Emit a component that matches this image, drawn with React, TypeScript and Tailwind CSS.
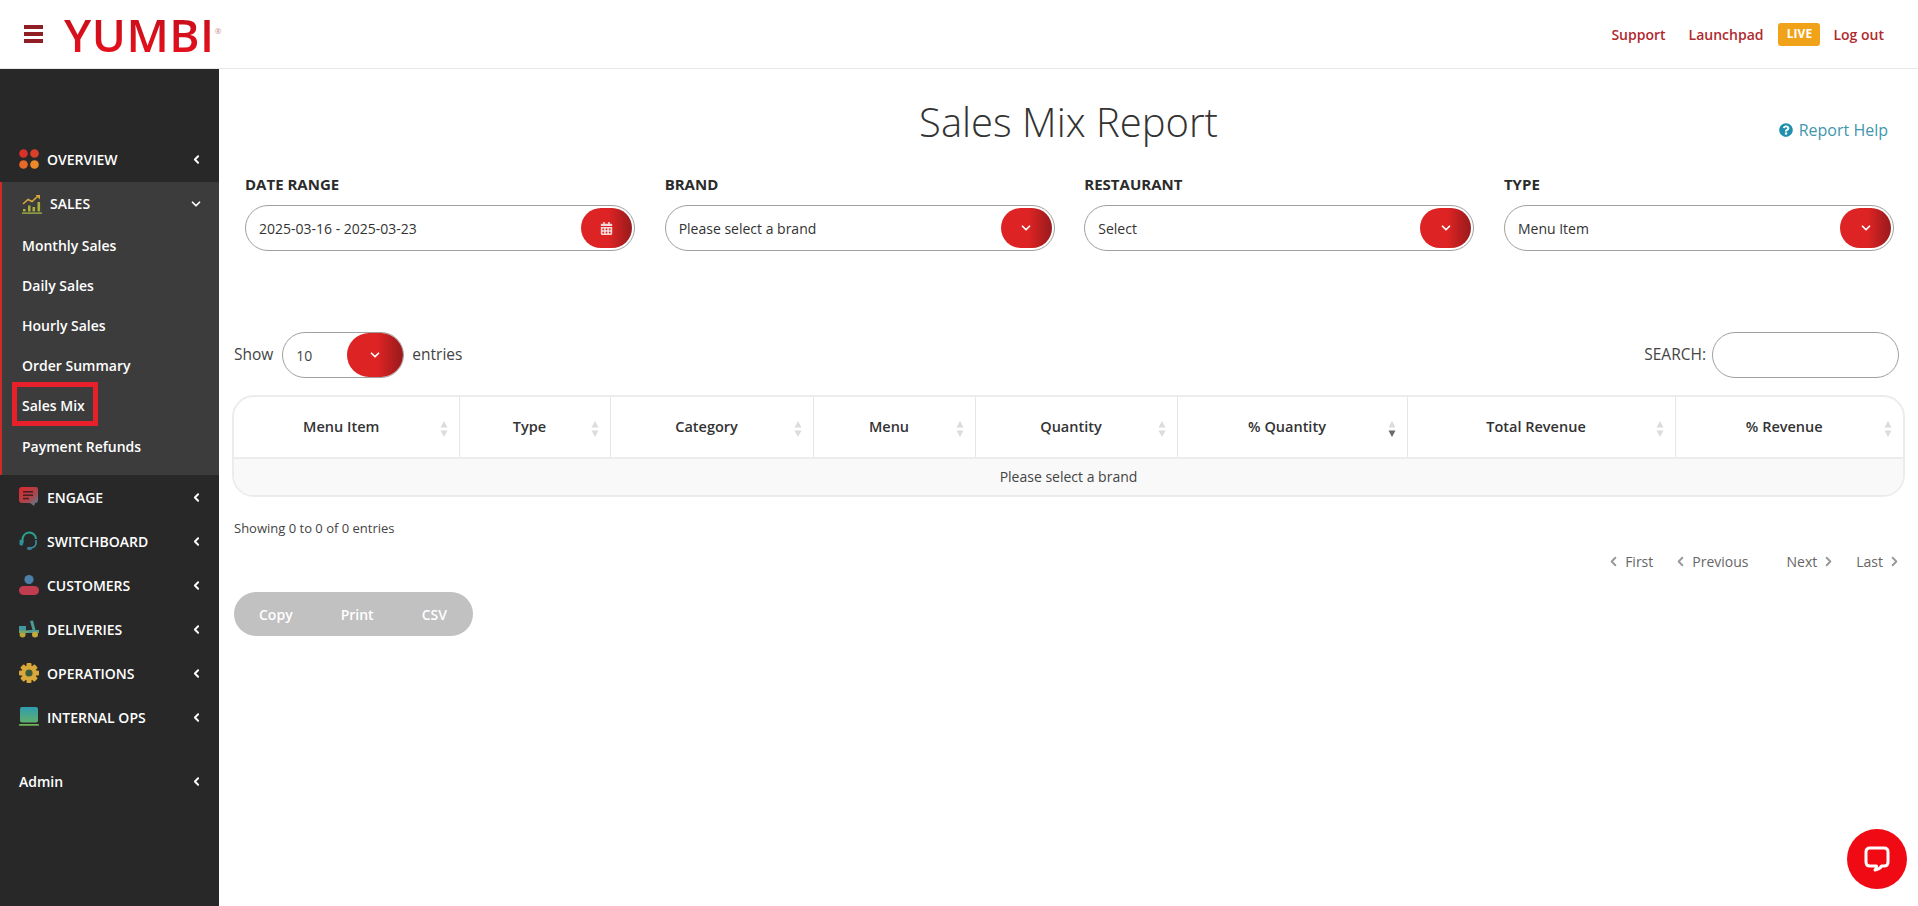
import {FC, ReactNode} from 'react'
import {ChevronDown, ChevronLeft, ChevronRight} from 'lucide-react'
import {FaCalendarAlt, FaQuestionCircle} from 'react-icons/fa'

const OverviewIcon = () => (
  <svg width="20" height="20" viewBox="0 0 20 20">
    <circle cx="4.5" cy="4.5" r="4.3" fill="#d9302c" />
    <circle cx="15.5" cy="4.5" r="4.3" fill="#d9402c" />
    <circle cx="4.5" cy="15.5" r="4.3" fill="#e8682a" />
    <circle cx="15.5" cy="15.5" r="4.3" fill="#ec8a2a" />
  </svg>
)

const SalesIcon = () => (
  <svg width="20" height="20" viewBox="0 0 20 20">
    <path d="M1 10 L6 5.5 L10 7.5 L16 2" fill="none" stroke="#d8a63a" strokeWidth="1.6" />
    <path d="M13.5 1 H18 V5.5 Z" fill="#d8a63a" />
    <rect x="1" y="15" width="2.6" height="2.4" fill="#a8ad3c" />
    <rect x="6" y="11.5" width="2.6" height="6" fill="#a8ad3c" />
    <rect x="10.5" y="13" width="2.6" height="4.4" fill="#a8ad3c" />
    <rect x="15.5" y="8" width="2.6" height="9.4" fill="#a8ad3c" />
    <rect x="0" y="18.4" width="20" height="1.4" fill="#9bb04a" />
  </svg>
)

const EngageIcon = () => (
  <svg width="20" height="20" viewBox="0 0 20 20">
    <defs>
      <linearGradient id="eng" x1="0" y1="0" x2="1" y2="1">
        <stop offset="0" stopColor="#e0262c" />
        <stop offset="0.6" stopColor="#a8474f" />
        <stop offset="1" stopColor="#4a8a9a" />
      </linearGradient>
    </defs>
    <path d="M3 0 H17 Q19 0 19 3 V13 Q19 16 16 16 H16 L15 19 L11 16 H3 Q0 16 0 13 V3 Q0 0 3 0 Z" fill="url(#eng)" />
    <rect x="4" y="4" width="10" height="1.6" fill="#4a1f22" />
    <rect x="4" y="7.4" width="10" height="1.6" fill="#4a1f22" />
    <rect x="4" y="10.8" width="6" height="1.6" fill="#4a1f22" />
  </svg>
)

const SwitchboardIcon = () => (
  <svg width="20" height="20" viewBox="0 0 20 20" fill="none">
    <path d="M3.6 12 V8.5 A6.6 6.6 0 0 1 17 8" stroke="#2aa08f" strokeWidth="2" />
    <path d="M17 9 V12 Q17 16.5 11 17" stroke="#3a8fa0" strokeWidth="1.6" />
    <rect x="0.5" y="8.5" width="3.6" height="6" rx="1.6" fill="#2f8f9a" />
    <ellipse cx="10.5" cy="17.4" rx="2.6" ry="1.6" fill="#3a7f9f" />
  </svg>
)

const CustomersIcon = () => (
  <svg width="20" height="20" viewBox="0 0 20 20">
    <circle cx="10" cy="4.6" r="4.6" fill="#4a80a8" />
    <rect x="0" y="11" width="20" height="9" rx="4.5" fill="#c23c50" />
  </svg>
)

const DeliveriesIcon = () => (
  <svg width="20" height="20" viewBox="0 0 20 20">
    <path d="M0 7 H7 V12 H0 Z" fill="#3f97a0" />
    <path d="M11 2 L14 1.5 L16.5 11 H20 V14 H7 L9 11 H13.5 Z" fill="#4a9a96" />
    <circle cx="3.6" cy="15.5" r="3" fill="#b7a63c" />
    <circle cx="16" cy="15.5" r="3" fill="#c7a83a" />
    <rect x="0" y="11.5" width="9" height="2.5" fill="#7aa26c" />
  </svg>
)

const OperationsIcon = () => (
  <svg width="20" height="20" viewBox="0 0 20 20">
    <g fill="#d8a83a">
      <circle cx="10" cy="10" r="7.4" />
      <rect x="7.5" y="0" width="5" height="20" rx="1" />
      <rect x="0" y="7.5" width="20" height="5" rx="1" />
      <rect x="7.5" y="0" width="5" height="20" rx="1" transform="rotate(45 10 10)" />
      <rect x="7.5" y="0" width="5" height="20" rx="1" transform="rotate(-45 10 10)" />
    </g>
    <circle cx="10" cy="10" r="3.6" fill="#3b5a3c" />
  </svg>
)

const InternalIcon = () => (
  <svg width="20" height="20" viewBox="0 0 20 20">
    <defs>
      <linearGradient id="int" x1="0" y1="0" x2="0" y2="1">
        <stop offset="0" stopColor="#2f9db0" />
        <stop offset="1" stopColor="#5fae6c" />
      </linearGradient>
    </defs>
    <rect x="1" y="0" width="18" height="15.5" rx="2" fill="url(#int)" />
    <rect x="0" y="17" width="20" height="1.8" rx="0.9" fill="#6fb25a" />
  </svg>
)

const MenuRow: FC<{icon?: ReactNode; label: string}> = ({icon, label}) => (
  <div className="h-[44px] flex items-center pl-[19px] pr-[16px] text-[14px] font-semibold text-white">
    <span className="w-[28px] shrink-0">{icon}</span>
    <span className="flex-1">{label}</span>
    <ChevronLeft size={13} strokeWidth={3.5} />
  </div>
)

const Sidebar = () => {
  const sub = ['Monthly Sales', 'Daily Sales', 'Hourly Sales', 'Order Summary', 'Sales Mix', 'Payment Refunds']
  return (
    <aside className="w-[219px] shrink-0 bg-[#282828] pt-[68px]">
      <div className="pb-[1px]">
        <MenuRow icon={<OverviewIcon />} label="OVERVIEW" />
      </div>
      <div className="bg-[#3c3c3c] border-l-2 border-[#cf2a2a] h-[293px]">
        <div className="h-[43px] flex items-center pl-[20px] pr-[16px] text-[14px] font-semibold text-white">
          <span className="w-[28px] shrink-0">
            <SalesIcon />
          </span>
          <span className="flex-1">SALES</span>
          <ChevronDown size={14} strokeWidth={3} />
        </div>
        {sub.map((s) => (
          <div key={s} className="relative h-[40.2px] flex items-center pl-[20px] text-[14px] font-semibold text-white">
            {s}
            {s === 'Sales Mix' && (
              <div className="absolute left-[10px] top-[-4px] w-[86px] h-[44px] border-[5px] border-[#e8202c]" />
            )}
          </div>
        ))}
      </div>
      <MenuRow icon={<EngageIcon />} label="ENGAGE" />
      <MenuRow icon={<SwitchboardIcon />} label="SWITCHBOARD" />
      <MenuRow icon={<CustomersIcon />} label="CUSTOMERS" />
      <MenuRow icon={<DeliveriesIcon />} label="DELIVERIES" />
      <MenuRow icon={<OperationsIcon />} label="OPERATIONS" />
      <MenuRow icon={<InternalIcon />} label="INTERNAL OPS" />
      <div className="mt-[20px] h-[44px] flex items-center pl-[19px] pr-[16px] text-[14px] font-semibold text-white">
        <span className="flex-1">Admin</span>
        <ChevronLeft size={13} strokeWidth={3.5} />
      </div>
    </aside>
  )
}

const RedBtn: FC<{children: ReactNode; w: string}> = ({children, w}) => (
  <div
    className={`${w} h-[40px] rounded-full bg-linear-to-r from-[#dd2323] from-55% to-[#981a1c] flex items-center justify-center text-white shrink-0`}
  >
    {children}
  </div>
)

const Filter: FC<{label: string; value: string; calendar?: boolean}> = ({label, value, calendar}) => (
  <div>
    <div className="text-[15px] font-bold text-[#2b2b2b] leading-[20px] mb-[11px]">{label}</div>
    <div className="h-[46px] rounded-full border border-[#a0a0a0] flex items-center justify-between pl-[13px] pr-[2px] text-[14px] text-[#333]">
      <span>{value}</span>
      <RedBtn w="w-[51px]">
        {calendar ? <FaCalendarAlt size={13} className="text-[#f6dada]" /> : <ChevronDown size={14} strokeWidth={3} />}
      </RedBtn>
    </div>
  </div>
)

const columns = [
  {name: 'Menu Item', w: 'w-[225px]'},
  {name: 'Type', w: 'w-[151px]'},
  {name: 'Category', w: 'w-[203px]'},
  {name: 'Menu', w: 'w-[162px]'},
  {name: 'Quantity', w: 'w-[202px]'},
  {name: '% Quantity', w: 'w-[230px]', sorted: true},
  {name: 'Total Revenue', w: 'w-[268px]'},
  {name: '% Revenue', w: 'w-[228px]'},
]

const SortIcon: FC<{sorted?: boolean}> = ({sorted}) => (
  <svg width="8" height="18" viewBox="0 0 8 18" className="absolute right-[11px] top-[23px]">
    <path d="M4 1 L7.5 7.5 H0.5 Z" fill="#dcdcdc" />
    <path d="M4 17 L7.5 10.5 H0.5 Z" fill={sorted ? '#6a6a6a' : '#dcdcdc'} />
  </svg>
)

const App = () => (
  <div className="h-[906px] overflow-hidden bg-white font-['Open_Sans',sans-serif] relative">
    <header className="h-[69px] flex items-center justify-between border-b border-[#e7e7e7] bg-white">
      <div className="flex items-center pl-[24px]">
        <div className="w-[19px] flex flex-col gap-[3px]">
          <div className="h-[4px] bg-[#8f1f25]" />
          <div className="h-[4px] bg-[#8f1f25]" />
          <div className="h-[4px] bg-[#8f1f25]" />
        </div>
        <div className="ml-[21px] relative text-[46px] leading-none tracking-[0.5px] font-semibold bg-linear-to-b from-[#c40f1c] to-[#e8101c] bg-clip-text text-transparent">
          YUMBI
        </div>
        <span className="self-start text-[8px] text-[#c98a8a] mt-[14px]">®</span>
      </div>
      <div className="flex items-center pr-[34px] text-[14px] font-semibold text-[#b02a2e]">
        <span>Support</span>
        <span className="ml-[23px]">Launchpad</span>
        <span className="ml-[15px] w-[42px] h-[23px] rounded-[3px] bg-[#f0a318] text-white text-[12px] font-bold flex items-center justify-center">
          LIVE
        </span>
        <span className="ml-[13px]">Log out</span>
      </div>
    </header>
    <div className="flex h-[837px]">
      <Sidebar />
      <main className="flex-1 min-w-0">
        <div className="grid grid-cols-[1fr_auto_1fr] h-[105px] pt-[23px]">
          <div />
          <h1 className="text-[40px] font-light text-[#333] leading-[60px]">Sales Mix Report</h1>
          <div className="flex justify-end items-start pt-[26px] pr-[30px] text-[16px] text-[#3f96ad]">
            <span className="flex items-center gap-[6px]">
              <FaQuestionCircle size={14} className="text-[#1f8fb0]" />
              Report Help
            </span>
          </div>
        </div>
        <div className="grid grid-cols-4 gap-x-[29.6px] pl-[26px] pr-[24px]">
          <Filter label="DATE RANGE" value="2025-03-16 - 2025-03-23" calendar />
          <Filter label="BRAND" value="Please select a brand" />
          <Filter label="RESTAURANT" value="Select" />
          <Filter label="TYPE" value="Menu Item" />
        </div>
        <div className="mt-[81px] pl-[15px] pr-[19px] flex items-center justify-between text-[15.5px] text-[#444]">
          <div className="flex items-center">
            <span>Show</span>
            <div className="ml-[9px] w-[122px] h-[46px] rounded-full border border-[#a0a0a0] flex items-center justify-between pl-[13px] text-[14px]">
              <span>10</span>
              <div className="w-[56px] h-[44px] rounded-full bg-linear-to-r from-[#dd2323] from-55% to-[#981a1c] flex items-center justify-center text-white">
                <ChevronDown size={14} strokeWidth={3} />
              </div>
            </div>
            <span className="ml-[8px]">entries</span>
          </div>
          <div className="flex items-center gap-[6px]">
            <span>SEARCH:</span>
            <div className="w-[187px] h-[46px] rounded-[23px] border border-[#a0a0a0]" />
          </div>
        </div>
        <div className="ml-[13px] mr-[13px] mt-[17px] border-2 border-[#ececec] rounded-[22px] overflow-hidden">
          <table className="w-full table-fixed border-collapse">
            <thead>
              <tr className="h-[61px] border-b-2 border-[#ececec]">
                {columns.map((c, i) => (
                  <th
                    key={c.name}
                    className={`${c.w} relative pr-[10px] text-center text-[14.5px] font-semibold text-[#333] ${i < 7 ? 'border-r border-[#e6e6e6]' : ''}`}
                  >
                    {c.name}
                    <SortIcon sorted={c.sorted} />
                  </th>
                ))}
              </tr>
            </thead>
            <tbody>
              <tr className="h-[37px] bg-[#f9f9f9]">
                <td colSpan={8} className="pb-[2px] text-center text-[14px] text-[#444]">
                  Please select a brand
                </td>
              </tr>
            </tbody>
          </table>
        </div>
        <div className="ml-[15px] mt-[22px] text-[13px] leading-[18px] text-[#444]">Showing 0 to 0 of 0 entries</div>
        <div className="mt-[14px] pr-[16px] flex justify-end items-center text-[14px] text-[#666]">
          <span className="flex items-center gap-[4px]">
            <ChevronLeft size={15} strokeWidth={3} className="text-[#999]" /> First
          </span>
          <span className="ml-[20px] flex items-center gap-[4px]">
            <ChevronLeft size={15} strokeWidth={3} className="text-[#999]" /> Previous
          </span>
          <span className="ml-[38px] flex items-center gap-[4px]">
            Next <ChevronRight size={15} strokeWidth={3} className="text-[#999]" />
          </span>
          <span className="ml-[20px] flex items-center gap-[4px]">
            Last <ChevronRight size={15} strokeWidth={3} className="text-[#999]" />
          </span>
        </div>
        <div className="ml-[15px] mt-[20px] w-[239px] h-[44px] rounded-full bg-[#c1c1c1] flex items-center text-[14px] font-semibold text-white">
          <span className="ml-[25px]">Copy</span>
          <span className="ml-[48px]">Print</span>
          <span className="ml-[48px]">CSV</span>
        </div>
      </main>
    </div>
    <div className="absolute left-[1847px] top-[829px] w-[60px] h-[60px] rounded-full bg-[#f00a14] flex items-center justify-center">
      <svg width="30" height="30" viewBox="0 0 30 30" fill="none">
        <path
          d="M8 4 H22 Q26 4 26 8 V18 Q26 22 22 22 H19.5 Q18 25 13 26 Q14.5 24.5 14.5 22 H8 Q4 22 4 18 V8 Q4 4 8 4 Z"
          stroke="#fff"
          strokeWidth="3"
          strokeLinejoin="round"
        />
      </svg>
    </div>
  </div>
)

export default App
